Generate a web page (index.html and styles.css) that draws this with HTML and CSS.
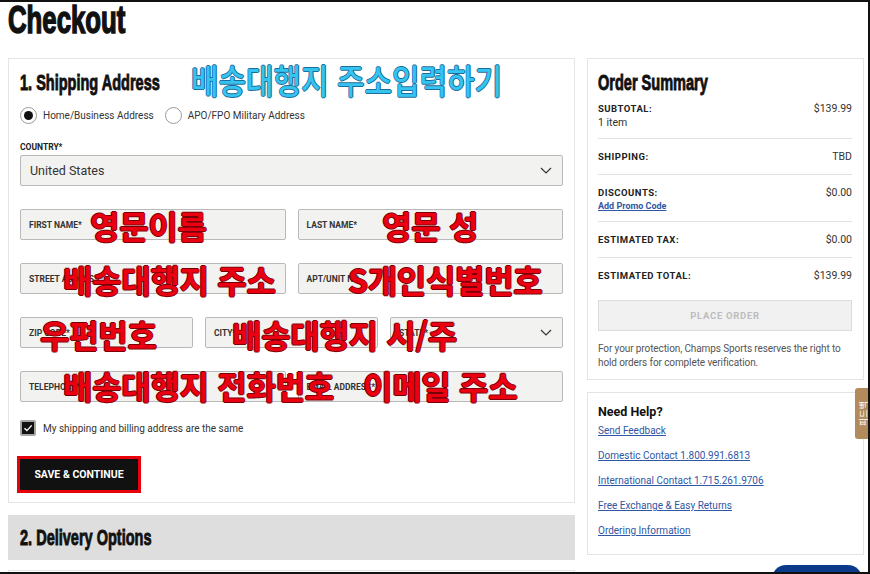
FILE: index.html
```html
<!DOCTYPE html>
<html lang="ko">
<head>
<meta charset="utf-8">
<title>Checkout</title>
<link rel="stylesheet" href="styles.css">
</head>
<body>
<div class="page">
  <h1 class="page-title"><span class="cond">Checkout</span></h1>
  <div class="layout">
    <div class="main-col">
      <section class="card shipping">
        <h2 class="section-title"><span class="cond">1. Shipping Address</span></h2>
        <div class="radio-row">
          <span class="radio checked"></span><span class="radio-label">Home/Business Address</span>
          <span class="radio"></span><span class="radio-label">APO/FPO Military Address</span>
        </div>
        <div class="field-label">COUNTRY*</div>
        <div class="select">
          <span>United States</span>
          <svg class="chev" width="12" height="7" viewBox="0 0 12 7"><path d="M1 1l5 5 5-5" fill="none" stroke="#333" stroke-width="1.2"/></svg>
        </div>
        <div class="fields">
          <div class="row two">
            <div class="input"><span>FIRST NAME*</span></div>
            <div class="input"><span>LAST NAME*</span></div>
          </div>
          <div class="row two">
            <div class="input"><span>STREET ADDRESS*</span></div>
            <div class="input"><span>APT/UNIT NO.</span></div>
          </div>
          <div class="row three">
            <div class="input"><span>ZIP CODE*</span></div>
            <div class="input"><span>CITY*</span></div>
            <div class="input select-in"><span>STATE*</span>
              <svg class="chev" width="12" height="7" viewBox="0 0 12 7"><path d="M1 1l5 5 5-5" fill="none" stroke="#333" stroke-width="1.2"/></svg>
            </div>
          </div>
          <div class="row two">
            <div class="input"><span>TELEPHONE*</span></div>
            <div class="input"><span>EMAIL ADDRESS*</span></div>
          </div>
        </div>
        <div class="check-row">
          <span class="checkbox"><svg width="12" height="12" viewBox="0 0 12 12"><path d="M2.5 6.2l2.4 2.4 4.8-5.2" fill="none" stroke="#fff" stroke-width="1.4"/></svg></span>
          <span class="check-label">My shipping and billing address are the same</span>
        </div>
        <button class="save">SAVE &amp; CONTINUE</button>

        <div class="note cyan n-title">배송대행지 주소입력하기</div>
        <div class="note red n1">영문이름</div>
        <div class="note red n2">영문 성</div>
        <div class="note red n3">배송대행지 주소</div>
        <div class="note red n4">S개인식별번호</div>
        <div class="note red n5">우편번호</div>
        <div class="note red n6">배송대행지 시/주</div>
        <div class="note red n7">배송대행지 전화번호</div>
        <div class="note red n8">이메일 주소</div>
      </section>
      <section class="collapsed">
        <h2 class="section-title"><span class="cond">2. Delivery Options</span></h2>
      </section>
      <section class="card next-card"></section>
    </div>

    <aside class="side-col">
      <section class="card summary">
        <h2 class="section-title"><span class="cond">Order Summary</span></h2>
        <div class="sum-row first">
          <div><div class="sum-label">SUBTOTAL:</div><div class="sum-sub">1 item</div></div>
          <div class="sum-val">$139.99</div>
        </div>
        <div class="sum-row">
          <div class="sum-label">SHIPPING:</div>
          <div class="sum-val">TBD</div>
        </div>
        <div class="sum-row disc">
          <div><div class="sum-label">DISCOUNTS:</div><a class="promo" href="#">Add Promo Code</a></div>
          <div class="sum-val">$0.00</div>
        </div>
        <div class="sum-row">
          <div class="sum-label">ESTIMATED TAX:</div>
          <div class="sum-val">$0.00</div>
        </div>
        <div class="sum-row last">
          <div class="sum-label">ESTIMATED TOTAL:</div>
          <div class="sum-val">$139.99</div>
        </div>
        <div class="place">PLACE ORDER</div>
        <p class="protect">For your protection, Champs Sports reserves the right to hold orders for complete verification.</p>
      </section>
      <section class="card help">
        <h3 class="help-title">Need Help?</h3>
        <a class="help-link" href="#">Send Feedback</a>
        <a class="help-link" href="#">Domestic Contact 1.800.991.6813</a>
        <a class="help-link" href="#">International Contact 1.715.261.9706</a>
        <a class="help-link" href="#">Free Exchange &amp; Easy Returns</a>
        <a class="help-link" href="#">Ordering Information</a>
      </section>
    </aside>
  </div>
</div>
<div class="feedback-tab"><span>피드백</span></div>
<div class="chat-pill"></div>
<div class="frame"></div>
</body>
</html>
```

FILE: styles.css
```css
html, body {
  margin: 0;
  overflow: hidden;
  height: 574px;
}
body {
  font-family: Roboto, "Noto Sans CJK KR", sans-serif;
  color: #333;
  background: #fff;
}
.cond {
  display: inline-block;
  transform: scaleX(0.66);
  transform-origin: left center;
  white-space: nowrap;
  -webkit-text-stroke: 0.9px #111;
}
.page-title {
  margin: 0;
  padding: 1px 0 0 8px;
  font: bold 39px/38px "Liberation Sans", Arial, sans-serif;
  color: #111;
}
.page-title .cond {
  -webkit-text-stroke: 1.6px #111;
}
.layout {
  display: grid;
  grid-template-columns: 567px 277px;
  column-gap: 12px;
  margin-top: 19px;
  padding-left: 8px;
}
.card {
  border: 1px solid #e4e4e4;
  background: #fff;
}
.shipping {
  position: relative;
  padding: 0 11px 12px 11px;
}
.section-title {
  margin: 0;
  padding-top: 11px;
  font: bold 22px/26px "Liberation Sans", Arial, sans-serif;
  color: #111;
}
.radio-row {
  display: flex;
  align-items: center;
  margin-top: 11px;
  height: 17px;
}
.radio {
  width: 15px;
  height: 15px;
  border: 1px solid #9a9a9a;
  border-radius: 50%;
  box-sizing: content-box;
  display: flex;
  align-items: center;
  justify-content: center;
  background: #fff;
}
.radio.checked::after {
  content: "";
  width: 9px;
  height: 9px;
  border-radius: 50%;
  background: #111;
}
.radio-label {
  font-size: 10px;
  color: #333;
  margin-left: 6px;
  margin-right: 11px;
}
.field-label {
  margin-top: 17px;
  font-size: 8.5px;
  line-height: 12px;
  font-weight: bold;
  color: #222;
}
.select {
  margin-top: 2px;
  height: 31px;
  box-sizing: border-box;
  border: 1px solid #b9b9b9;
  border-radius: 2px;
  background: #f2f2f1;
  display: flex;
  align-items: center;
  justify-content: space-between;
  padding: 0 10px 0 9px;
  font-size: 12.5px;
  color: #333;
}
.fields {
  margin-top: 23px;
  display: flex;
  flex-direction: column;
  gap: 23px;
}
.row {
  display: grid;
  column-gap: 12px;
}
.row.two { grid-template-columns: 1fr 1fr; }
.row.three { grid-template-columns: 1fr 1fr 1fr; }
.input {
  height: 31px;
  box-sizing: border-box;
  border: 1px solid #b9b9b9;
  border-radius: 2px;
  background: #f2f2f1;
  display: flex;
  align-items: center;
  justify-content: space-between;
  padding: 0 10px 0 8px;
  font-size: 8.5px;
  font-weight: bold;
  color: #333;
}
.check-row {
  margin-top: 18px;
  display: flex;
  align-items: center;
  height: 16px;
}
.checkbox {
  width: 16px;
  height: 16px;
  box-sizing: border-box;
  border: 2px solid #a5a5a5;
  border-radius: 2px;
  background: #111;
  display: flex;
  align-items: center;
  justify-content: center;
}
.check-label {
  margin-left: 7px;
  font-size: 10px;
  color: #333;
}
.save {
  display: block;
  margin-top: 23px;
  margin-left: 0;
  height: 31px;
  width: 118px;
  padding: 0;
  border: none;
  background: #111;
  color: #fff;
  font-family: Roboto, sans-serif;
  font-weight: bold;
  font-size: 10.5px;
  outline: 3px solid #e8000b;
}
.collapsed {
  margin-top: 12px;
  height: 45px;
  background: #dedede;
  padding-left: 12px;
}
.collapsed .section-title {
  padding-top: 0;
  line-height: 45px;
}
.next-card {
  margin-top: 10px;
  height: 40px;
}

/* annotations over the form */
.note {
  position: absolute;
  white-space: nowrap;
  font-family: "Noto Sans CJK KR", sans-serif;
  line-height: 1;
}
.note.red {
  font-size: 32px;
  font-weight: bold;
  letter-spacing: -0.3px;
  color: #ea0010;
  text-shadow: 1px 0 #7a0008, -1px 0 #7a0008, 0 1px #7a0008, 0 -1px #7a0008;
}
.note.cyan {
  font-size: 34px;
  font-weight: 500;
  color: #35c4ef;
  transform: scaleX(0.88);
  transform-origin: left center;
  text-shadow: 1px 0 #1b6d9c, -1px 0 #1b6d9c, 0 1px #1b6d9c, 0 -1px #1b6d9c;
}
.n-title { left: 182px; top: 4px; }
.n1 { left: 81px; top: 150px; }
.n2 { left: 373px; top: 150px; }
.n3 { left: 54px; top: 204px; }
.n4 { left: 339px; top: 204px; }
.n5 { left: 31px; top: 259px; }
.n6 { left: 223px; top: 259px; }
.n7 { left: 54px; top: 310px; }
.n8 { left: 354px; top: 310px; }

/* summary */
.side-col {
  display: flex;
  flex-direction: column;
  gap: 12px;
}
.summary {
  padding: 0 11px 10px 10px;
}
.sum-row {
  display: flex;
  justify-content: space-between;
  align-items: flex-start;
  padding: 11px 0 10px;
  border-bottom: 1px solid #e2e2e2;
  line-height: 14px;
}
.sum-row.first { padding-top: 6px; padding-bottom: 8px; }
.sum-row.disc { padding-bottom: 9px; }
.sum-row.last { border-bottom: none; padding-bottom: 0; }
.sum-label {
  font-size: 9.5px;
  font-weight: bold;
  letter-spacing: 0.5px;
  color: #222;
}
.sum-sub, .sum-val {
  font-size: 10.5px;
  color: #333;
}
.promo {
  display: block;
  font-size: 9px;
  line-height: 12px;
  font-weight: bold;
  color: #2f57a4;
  text-decoration: underline;
}
.place {
  margin-top: 17px;
  height: 31px;
  box-sizing: border-box;
  border: 1px solid #dcdcdc;
  background: #f1f1f1;
  display: flex;
  align-items: center;
  justify-content: center;
  font-size: 9.5px;
  font-weight: bold;
  letter-spacing: 0.7px;
  color: #bdbdbd;
}
.protect {
  margin: 11px 0 0;
  font-size: 10px;
  letter-spacing: -0.1px;
  line-height: 13.5px;
  color: #555;
}
.help {
  padding: 11px 11px 17px 10px;
  display: flex;
  flex-direction: column;
  align-items: flex-start;
}
.help-title {
  margin: 0;
  font-size: 12.5px;
  line-height: 16px;
  font-weight: bold;
  color: #111;
}
.help-link {
  margin-top: 12px;
  font-size: 10px;
  line-height: 13px;
  color: #2f57a4;
  text-decoration: underline;
}
.help-title + .help-link { margin-top: 4px; }

/* overlays */
.feedback-tab {
  position: fixed;
  left: 855px;
  top: 388px;
  width: 16px;
  height: 51px;
  background: #b28a5c;
  border-radius: 3px 0 0 3px;
  display: flex;
  align-items: center;
  justify-content: center;
}
.feedback-tab span {
  display: block;
  transform: rotate(-90deg);
  white-space: nowrap;
  font-family: "Noto Sans CJK KR", sans-serif;
  font-size: 9px;
  color: #fff;
}
.chat-pill {
  position: fixed;
  left: 772px;
  top: 565px;
  width: 90px;
  height: 20px;
  border-radius: 14px 14px 0 0;
  background: #0b3a8a;
}
.frame {
  position: fixed;
  inset: 0;
  border-top: 2px solid #111;
  border-right: 2px solid #111;
  border-bottom: 2px solid #111;
  pointer-events: none;
}
```
